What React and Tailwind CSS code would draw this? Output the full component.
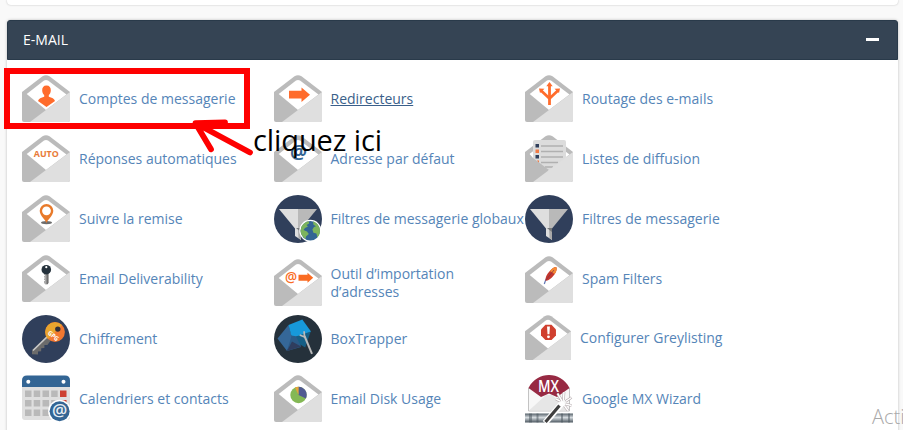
import React from "react";

function Envelope({ children, className = "h-12 w-12" }) {
  return (
    <svg viewBox="0 0 48 48" className={className}>
      <path
        d="M0 17 20.500 1.300Q24-1 27.500 1.300L48 17v28q0 2-2 2H2q-2 0-2-2z"
        fill="#bbbbbb"
      />
      <path d="M4.700 19 22 5.600q2-1.400 4 0L44.500 19.500 24 35z" fill="#fff" />
      {children}
      <path d="M48 17 8 47h38q2 0 2-2z" fill="#dfdfdf" />
    </svg>
  );
}

function Circle({ children, fill = "#303f5b" }) {
  return (
    <svg viewBox="0 0 48 48" className="h-12 w-12">
      <circle cx="24" cy="24" r="24" fill={fill} />
      {children}
    </svg>
  );
}

function Funnel() {
  return (
    <>
      <path d="M5 14h19v19.500h-3z" fill="#dedede" />
      <path d="M24 14h19L27 33.500h-3z" fill="#b9b9b9" />
      <path d="M21 33h3.500l2.500 4v8l-6-4z" fill="#dedede" />
      <path d="M24 33h3v12l-2.500-2z" fill="#a9a9a9" />
      <path d="M22 33h5v4z" fill="#77797b" />
    </>
  );
}

function AccountsIcon() {
  return (
    <Envelope>
      <path
        d="M24.500 10.500c3 0 4.500 2 4.300 5-.1 2-.9 3.500-2 4.500v1.700c3 1.100 5.600 1.600 6.200 4.300L24.500 32 16 26c.6-2.700 3.200-3.200 6.200-4.300V20c-1.100-1-1.900-2.500-2-4.500-.2-3 1.300-5 4.300-5z"
        fill="#ff6c2c"
      />
    </Envelope>
  );
}

function ForwardersIcon() {
  return (
    <Envelope>
      <path d="M15 15.800h12.500v-3.300l8.500 7.200-8.500 7.300v-3.400H15z" fill="#ff6c2c" />
    </Envelope>
  );
}

function RoutingIcon() {
  return (
    <Envelope>
      <g fill="none" stroke="#ff6c2c" strokeWidth="2.800">
        <path d="M24.500 30V9" />
        <path d="M24.500 23.500 16 15.500M24.500 23.500 33 15.500" />
      </g>
      <path
        d="M24.500 7l3.200 4.200h-6.400zM14 13.500l5.500.3-4.500 4.200zM35 13.500l-5.500.3 4.500 4.200z"
        fill="#ff6c2c"
      />
    </Envelope>
  );
}

function AutoIcon() {
  return (
    <Envelope>
      <text
        x="24.300"
        y="22.200"
        textAnchor="middle"
        fontSize="9.200"
        fontWeight="700"
        textLength="25"
        lengthAdjust="spacingAndGlyphs"
        fill="#e87a38"
      >
        AUTO
      </text>
    </Envelope>
  );
}

function DefaultAddressIcon() {
  return (
    <Envelope>
      <text
        x="24.500"
        y="24"
        textAnchor="middle"
        fontSize="19"
        fontWeight="700"
        fill="#336594"
      >
        @
      </text>
    </Envelope>
  );
}

function ListIcon() {
  return (
    <Envelope>
      <path d="M8 7q0-2 2-2h29q2 0 2 2v17L24 37 8 26z" fill="#dcdcdc" />
      <g stroke="#b0b0b0" strokeWidth="1.300">
        <path d="M16 11h22M16 16.500h22M16 22h22M16 27.500h17M20 32h8" />
      </g>
      <path d="M10.500 9h3.500v3.500h-3.500zM10.500 20h3.500v3.500h-3.500z" fill="#303f5b" />
      <path d="M10.500 14.500h3.500V18h-3.500zM12 25.500h2V29z" fill="#f27b45" />
      <path d="M0 17v28q0 2 2 2h6l16-12z" fill="#bbbbbb" />
      <path d="M4.700 19 8 16.500v6.500z" fill="#fff" />
    </Envelope>
  );
}

function TrackIcon() {
  return (
    <Envelope>
      <ellipse cx="24.500" cy="27.600" rx="5.500" ry="1.700" fill="#6d6d6d" />
      <path
        d="M24.500 28c-1-3.500-6.800-7-6.800-12.200a6.800 6.800 0 0 1 13.600 0C31.300 21 25.500 24.500 24.500 28z"
        fill="#e87a2b"
      />
      <circle cx="24.500" cy="15.800" r="4.400" fill="#fff" />
    </Envelope>
  );
}

function GlobalFilterIcon() {
  return (
    <Circle>
      <Funnel />
      <circle cx="36.300" cy="35.800" r="11" fill="#fff" />
      <circle cx="36.300" cy="35.800" r="9.700" fill="#336594" />
      <path
        d="M27.500 31.500c1.800-3 4.200-5 7.300-5.300l.4 2.300-2.700 1.500 1.500 1.500-3 1.500-1.500 2 3.500 1.500 1.800 2.500-2.800 2.500-.5 2.500c-3-2-5-5-5-8.200zM39 26.500c4 1 7 5 7 9.300 0 2.700-1 5-2.600 6.700l-1-4-3-.8-1-3.200 1.600-2.500 2-.7-2.500-1.500z"
        fill="#7cb45d"
      />
    </Circle>
  );
}

function FilterIcon() {
  return (
    <Circle>
      <Funnel />
    </Circle>
  );
}

function DeliverabilityIcon() {
  return (
    <Envelope>
      <path d="M22 18h5v9.500l-1.500 2h-2L22 28z" fill="#aaaaaa" />
      <path d="M24.500 18h1.500v11h-1.500z" fill="#6f6f6f" />
      <path d="M22 20.500h1M22 23h1M22 25.500h1" stroke="#eee" />
      <circle cx="24.300" cy="14.700" r="4.800" fill="#25323c" />
      <circle cx="24.300" cy="12.200" r="1.100" fill="#fff" />
    </Envelope>
  );
}

function ImportIcon() {
  return (
    <Envelope>
      <text x="11" y="22.800" fontSize="13.500" fontWeight="600" fill="#fa6b22">
        @
      </text>
      <path d="M24.500 15.800h9v-2l5.700 4.900-5.700 5v-2h-9z" fill="#fa6b22" />
    </Envelope>
  );
}

function SpamIcon() {
  return (
    <Envelope>
      <path d="M19.300 28q1-4 3.500-7" stroke="#6178b5" fill="none" strokeWidth="1.200" />
      <path
        d="M31.200 11c1.200 1.800 0 5.500-2.600 8.600-2.300 2.700-5 5.600-8.200 5.200-.2-3.500 1.600-6.700 4-9.300 2.200-2.500 4.500-4.500 6.800-4.500z"
        fill="#c5362c"
      />
      <path d="M31.200 11c1.200 1.800.2 4.600-1.600 7l-4.700-3c2-2.500 4-4 6.300-4z" fill="#f58a35" />
      <path d="m21 24 8-10" stroke="#7c2f4b" strokeWidth=".7" />
    </Envelope>
  );
}

function EncryptionIcon() {
  return (
    <Circle>
      <path
        d="M25 20.500 10 35.300v4l6 .2v-3l3.200-.3v-3l3.200-.2v-3h3l3-4z"
        fill="#6b6b6b"
      />
      <path d="m25.500 21.500-14.500 14" stroke="#c9c9c9" strokeWidth="1.600" />
      <circle cx="33" cy="17" r="9.900" fill="#f27831" />
      <path d="M26 24a9.900 9.900 0 0 1 14-14z" fill="#e9a52e" />
      <circle cx="35.800" cy="14.100" r="2.700" fill="#30303a" />
      <text
        x="25.300"
        y="18.800"
        fontSize="6.500"
        fontWeight="700"
        fill="#fff"
        transform="rotate(39 25.300 18.800)"
        textLength="12"
        lengthAdjust="spacingAndGlyphs"
      >
        GPG
      </text>
    </Circle>
  );
}

function BoxTrapperIcon() {
  return (
    <Circle fill="#25313b">
      <path d="M14.500 10 3.500 23.500 13 36l5.500-12.500z" fill="#356798" />
      <path d="m14.500 10 3.500 9.500L13 36l14-4-2-11z" fill="#2b5b88" />
      <path d="m14.500 10 13.800-5.500L37 16.500l-8.700 5.700-11-1.700z" fill="#1799da" />
      <path d="m22 21.500 14.700-5-5.500 16-5-3z" fill="#155e85" />
      <path d="m18 26.500 9 5L13 36z" fill="#2f3d5e" />
      <path d="m30.500 21 7.500 17.800" stroke="#bababa" strokeWidth="2" />
      <path d="m25.700 20 4.800 2-.4-5.700" fill="none" stroke="#bababa" strokeWidth="1.700" />
    </Circle>
  );
}

function GreylistIcon() {
  return (
    <Envelope className="h-[46px] w-[46px]">
      <path
        d="m21.300 10.300h6.400l4.600 4.700v6.500l-4.600 4.700h-6.400l-4.600-4.700V15z"
        fill="#d0402f"
      />
      <path d="M23 12h3l-.5 8h-2z" fill="#fff" />
      <circle cx="24.500" cy="22.800" r="1.500" fill="#fff" />
    </Envelope>
  );
}

function CalendarIcon() {
  const rows = [15.5, 25, 34.5];
  const cols = [3, 11.7, 20.5, 29.2, 38];
  return (
    <svg viewBox="0 0 48 48" className="h-12 w-12">
      <path d="M0 11h48v31q0 3-3 3H3q-3 0-3-3z" fill="#dfdfdf" />
      <path d="M5 .500h38q5 0 5 5V12H0V5.500q0-5 5-5z" fill="#336594" />
      <circle cx="6.300" cy="6.800" r="2" fill="#fff" />
      <circle cx="41.500" cy="6.800" r="2" fill="#fff" />
      {rows.map((y, r) =>
        cols.map((x, c) => (
          <rect
            key={`${x}-${y}`}
            x={x}
            y={y}
            width="6.500"
            height="6.500"
            fill={c === 4 && r < 2 ? "#cd4132" : "#b9b9b9"}
          />
        ))
      )}
      <circle cx="37.600" cy="36.300" r="11.500" fill="#fff" />
      <circle cx="37.600" cy="36.300" r="10" fill="#336594" />
      <text x="37.600" y="40.800" textAnchor="middle" fontSize="17" fontWeight="600" fill="#e6edf3">
        @
      </text>
    </svg>
  );
}

function DiskUsageIcon() {
  return (
    <Envelope>
      <circle cx="24.500" cy="20" r="8.200" fill="#84b855" />
      <path d="M24.500 20V11.800A8.200 8.200 0 0 1 31.900 23.500z" fill="#515a91" />
      <path d="M24.500 20 21 12.600a8.200 8.200 0 0 1 3.500-.8z" fill="#e8a33a" />
    </Envelope>
  );
}

function MxIcon() {
  return (
    <svg viewBox="0 0 48 48" className="h-12 w-12">
      <defs>
        <linearGradient id="pipe" x1="0" y1="0" x2="0" y2="1">
          <stop offset="0" stopColor="#56616a" />
          <stop offset=".45" stopColor="#d5dbdf" />
          <stop offset="1" stopColor="#4c5760" />
        </linearGradient>
      </defs>
      <rect x="0" y="38.500" width="48" height="9" fill="url(#pipe)" />
      <path d="M4 38.500h3v9H4zM11.500 38.500h2v9h-2zM36 38.500h2v9h-2zM43 38.500h2v9h-2z" fill="#46515a" opacity=".5" />
      <path d="M3.500 13h41v23h-41z" fill="#f7f7f7" stroke="#b5b5b5" strokeWidth=".8" />
      <path d="M4 35.500 21 20h6l17 15.500z" fill="#e6e6e6" />
      <path d="M3.500 13C8 4 16 0 24 0s16 4 20.500 13L32 22l-8-3.500-8 3.500z" fill="#972a43" />
      <text
        x="13"
        y="16.800"
        fontSize="16.500"
        fontWeight="600"
        fill="#fff"
        textLength="21"
        lengthAdjust="spacingAndGlyphs"
      >
        MX
      </text>
      <path d="m20 48 18-21" stroke="#fff" strokeWidth="6" />
      <path d="m20.500 47 14-16.500" stroke="#3f3f3f" strokeWidth="3.200" />
      <path
        d="M37 26 32.500 18.500M38.500 25l.5-8M40.500 26.500l6-4M40.500 29l6 1.500M39.500 31l3.500 4.500M35 26l-4-2"
        stroke="#b0a5a8"
        strokeWidth="2.600"
      />
      <path
        d="M37 26 32.500 18.500M38.500 25l.5-8M40.500 26.500l6-4M40.500 29l6 1.500M39.500 31l3.500 4.500M35 26l-4-2"
        stroke="#fff"
        strokeWidth="1.500"
      />
      <path d="m35 30.500 3-3.500" stroke="#fff" strokeWidth="3.500" />
    </svg>
  );
}

const columns = [
  [
    { label: "Comptes de messagerie", icon: <AccountsIcon /> },
    { label: "Réponses automatiques", icon: <AutoIcon /> },
    { label: "Suivre la remise", icon: <TrackIcon /> },
    { label: "Email Deliverability", icon: <DeliverabilityIcon /> },
    { label: "Chiffrement", icon: <EncryptionIcon /> },
    { label: "Calendriers et contacts", icon: <CalendarIcon /> },
  ],
  [
    { label: "Redirecteurs", icon: <ForwardersIcon />, active: true },
    { label: "Adresse par défaut", icon: <DefaultAddressIcon /> },
    { label: "Filtres de messagerie globaux", icon: <GlobalFilterIcon /> },
    {
      label: (
        <>
          Outil d’importation
          <br />
          d’adresses
        </>
      ),
      icon: <ImportIcon />,
      row: "pt-1",
    },
    { label: "BoxTrapper", icon: <BoxTrapperIcon /> },
    { label: "Email Disk Usage", icon: <DiskUsageIcon /> },
  ],
  [
    { label: "Routage des e-mails", icon: <RoutingIcon /> },
    { label: "Listes de diffusion", icon: <ListIcon /> },
    { label: "Filtres de messagerie", icon: <FilterIcon /> },
    { label: "Spam Filters", icon: <SpamIcon />, row: "pt-px" },
    { label: "Configurer Greylisting", icon: <GreylistIcon />, height: "h-[46px]" },
    { label: "Google MX Wizard", icon: <MxIcon /> },
  ],
];

function Item({ label, icon, active, row = "", height = "h-12" }) {
  return (
    <li className="h-[60px]">
      <a href="#" className={`flex items-start gap-[9px] ${row}`}>
        <span className="shrink-0">{icon}</span>
        <span
          className={`flex items-center whitespace-nowrap leading-[18px] ${
            row === "pt-px" ? "h-[46px]" : height
          } ${active ? "text-[#3a5f8a] underline" : "text-[#5585b8]"}`}
        >
          <span>{label}</span>
        </span>
      </a>
    </li>
  );
}

export default function App() {
  return (
    <div className="relative h-[430px] w-[903px] overflow-hidden bg-[#f9f9f9] pl-[7px] font-['Open_Sans',sans-serif] text-sm">
      <div className="h-[5px] w-[891px] rounded-b bg-white shadow-[0_0_2px_rgba(0,0,0,0.25)]" />

      <section className="mt-[15px] h-[430px] w-[891px] rounded-t bg-white shadow-[0_0_3px_rgba(0,0,0,0.25)]">
        <header className="flex h-10 items-center justify-between rounded-t-[3px] border border-[#293a4a] bg-[#354454] pr-[18px] pl-[15px] text-white">
          <h2>E-MAIL</h2>
          <span className="mb-px h-[3px] w-[13px] bg-white" />
        </header>
        <div className="flex pt-[15px] pl-[15px]">
          {columns.map((items, i) => (
            <ul key={i} className="w-[251.5px] shrink-0">
              {items.map((item, j) => (
                <Item key={j} {...item} />
              ))}
            </ul>
          ))}
        </div>
      </section>

      <div className="absolute top-[68px] left-1 h-[61px] w-[246px] border-6 border-[#fe0000]" />
      <svg
        viewBox="190 115 70 45"
        className="absolute top-[115px] left-[190px] h-[45px] w-[70px]"
      >
        <path
          d="M250 152.500 198 124.500M225 122.300l-29.500.9 15.500 26"
          fill="none"
          stroke="#fe0000"
          strokeWidth="5.800"
          strokeLinecap="round"
          strokeLinejoin="round"
        />
      </svg>
      <p className="absolute top-[120px] left-[253px] text-[29px] leading-[40px] tracking-[-0.1px] whitespace-nowrap text-black">
        cliquez ici
      </p>
      <p className="absolute top-[403px] left-[872px] text-[20px] leading-[28px] font-light whitespace-nowrap text-[#a9a9a9]">
        Activer
      </p>
    </div>
  );
}
